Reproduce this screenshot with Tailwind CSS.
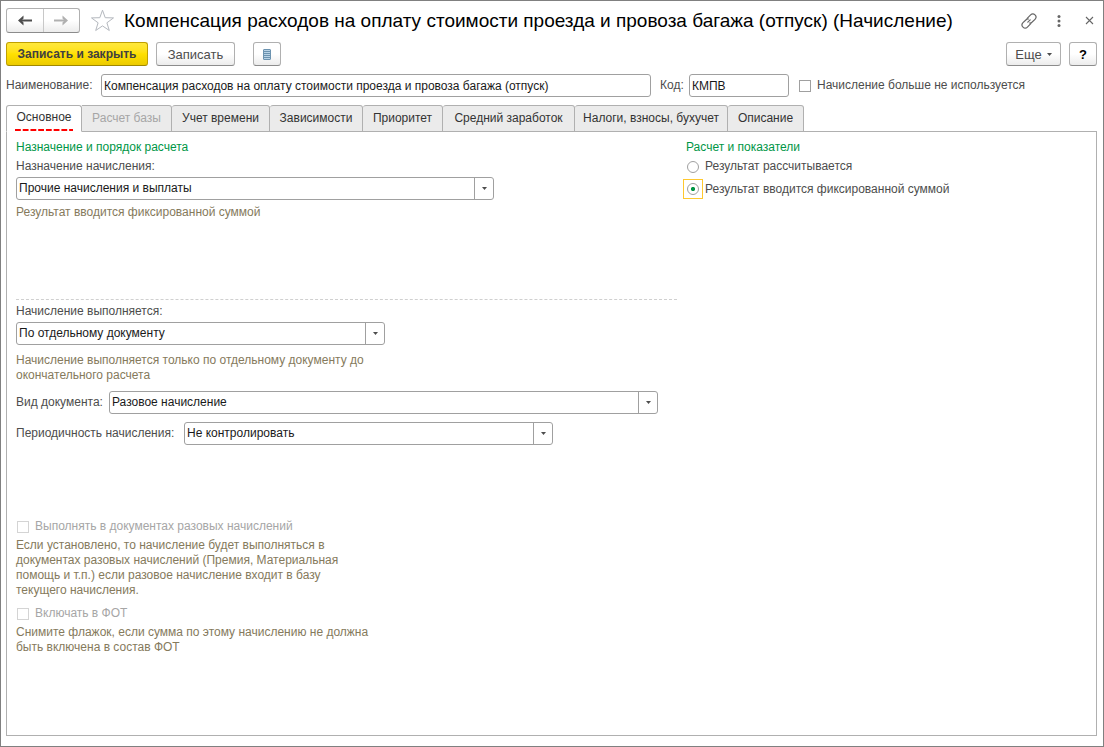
<!DOCTYPE html>
<html lang="ru">
<head>
<meta charset="utf-8">
<meta name="viewport" content="width=device-width, initial-scale=1">
<title>Компенсация расходов (Начисление)</title>
<script src="https://cdn.jsdelivr.net/npm/@tailwindcss/browser@4"></script>
</head>
<body class="flex min-h-screen flex-col border border-[#808080] bg-white pt-[7px] pr-[6px] pb-[10px] pl-[5px] font-['Liberation_Sans',Arial,sans-serif] text-[12px] leading-[15px] text-[#4d4d4d]">

<header class="flex h-[25px] items-center">
  <div class="flex h-[25px] w-[74px] shrink-0 rounded-[3px] border border-[#b0b0b0] border-b-[#8c8c8c] bg-linear-to-b from-white from-50% to-[#ececec]">
    <button type="button" aria-label="Назад" class="flex flex-1 items-center justify-center border-r border-[#c8c8c8]">
      <svg width="14" height="11" viewBox="0 0 14 11" fill="none" stroke="#4d4d4d" stroke-width="2"><path d="M14 5.500H3"/><path d="M5.500 0.500L0 5.500L5.500 10.500V7.500L3.500 5.500L5.500 3.500Z" fill="#4d4d4d" stroke="none"/></svg>
    </button>
    <button type="button" aria-label="Вперед" class="flex flex-1 items-center justify-center">
      <svg width="14" height="11" viewBox="0 0 14 11" fill="none" stroke="#b0b0b0" stroke-width="2"><path d="M0 5.500H11"/><path d="M8.500 0.500L14 5.500L8.500 10.500V7.500L10.500 5.500L8.500 3.500Z" fill="#b0b0b0" stroke="none"/></svg>
    </button>
  </div>
  <button type="button" aria-label="В избранное" class="ml-[10px] shrink-0">
    <svg width="25" height="23" viewBox="0 0 25 23" fill="#fff" stroke="#b4b8be" stroke-width="1"><path d="M12.500 1.200L15.200 8.700L23.500 8.900L16.900 13.800L19.300 21.500L12.500 16.900L5.700 21.500L8.100 13.800L1.500 8.900L9.800 8.700Z"/></svg>
  </button>
  <h1 class="ml-[9px] flex-1 text-[19px] leading-6 text-black">Компенсация расходов на оплату стоимости проезда и провоза багажа (отпуск) (Начисление)</h1>
  <div class="flex shrink-0 items-center pr-[3px]">
    <button type="button" aria-label="Получить ссылку">
      <svg width="16" height="16" viewBox="0 0 16 16" fill="none" stroke="#666" stroke-width="1.200" stroke-linecap="round"><path d="M6.200 5.300L9.600 1.900A2.900 2.900 0 0 1 14 6.300L10.900 9.300A2.900 2.900 0 0 1 8.600 10"/><path d="M9.800 10.700L6.400 14.100A2.900 2.900 0 0 1 2 9.700L5.100 6.700A2.900 2.900 0 0 1 7.400 6"/><path d="M6.800 9.200L9.200 6.800"/></svg>
    </button>
    <button type="button" aria-label="Дополнительно" class="ml-[20px]">
      <svg width="4" height="12" viewBox="0 0 4 12" fill="#666"><circle cx="2" cy="1.500" r="1.500"/><circle cx="2" cy="6" r="1.500"/><circle cx="2" cy="10.500" r="1.500"/></svg>
    </button>
    <button type="button" aria-label="Закрыть" class="ml-[24px]">
      <svg width="9" height="9" viewBox="0 0 9 9" fill="none" stroke="#666" stroke-width="1.100"><path d="M1 1L8 8M8 1L1 8"/></svg>
    </button>
  </div>
</header>

<div class="mt-[9px] flex items-center">
  <button type="button" class="h-6 w-[142px] rounded-[3px] border border-[#c0a000] border-b-[#a08800] bg-linear-to-b from-[#ffe83b] via-[#ffe000] to-[#eccb00] font-bold text-[#404040]">Записать и закрыть</button>
  <button type="button" class="ml-2 h-6 w-[79px] rounded-[3px] border border-[#b0b0b0] border-b-[#8c8c8c] bg-linear-to-b from-white from-50% to-[#ececec] text-[13px]">Записать</button>
  <button type="button" aria-label="Реестр" class="ml-[18px] flex h-6 w-7 items-center justify-center rounded-[3px] border border-[#b0b0b0] border-b-[#8c8c8c] bg-linear-to-b from-white from-50% to-[#ececec]">
    <svg width="8" height="11" viewBox="0 0 8 11"><rect x="0.500" y="0.500" width="7" height="10" rx="0.500" fill="#b9d3e6" stroke="#6c93b0"/><path d="M1 2.500H7M1 4.500H7M1 6.500H7M1 8.500H7" stroke="#6c93b0"/></svg>
  </button>
  <button type="button" class="ml-auto flex h-6 w-[55px] items-center justify-center gap-[5px] rounded-[3px] border border-[#b0b0b0] border-b-[#8c8c8c] bg-linear-to-b from-white from-50% to-[#ececec] text-[13px]">Еще
    <svg width="5" height="3" viewBox="0 0 5 3" fill="#4d4d4d"><path d="M0 0H5L2.500 3Z"/></svg>
  </button>
  <button type="button" aria-label="Справка" class="ml-2 h-6 w-7 rounded-[3px] border border-[#b0b0b0] border-b-[#8c8c8c] bg-linear-to-b from-white from-50% to-[#ececec] text-[13px] font-bold text-black">?</button>
</div>

<div class="mt-2 flex items-center">
  <label for="name" class="w-[95px] shrink-0 whitespace-nowrap">Наименование:</label>
  <input id="name" type="text" value="Компенсация расходов на оплату стоимости проезда и провоза багажа (отпуск)" class="h-[23px] w-[550px] min-w-0 rounded-[3px] border border-[#a0a0a0] px-[2px] text-[#1a1a1a]">
  <label for="code" class="ml-[9px] w-[29px] shrink-0 whitespace-nowrap">Код:</label>
  <input id="code" type="text" value="КМПВ" class="h-[23px] w-[100px] rounded-[3px] border border-[#a0a0a0] px-[2px] text-[#1a1a1a]">
  <label class="ml-[10px] flex items-center gap-[6px] whitespace-nowrap"><input type="checkbox" class="size-3 appearance-none border border-[#a0a0a0] bg-white checked:bg-[#009646]">Начисление больше не используется</label>
</div>

<nav role="tablist" class="relative z-10 mt-2 -mb-px flex h-[27px] text-[#333]">
  <button type="button" role="tab" aria-selected="true" class="w-[76px] rounded-t-[3px] border border-[#b0b0b0] border-b-white bg-white px-[8px] whitespace-nowrap"><span class="flex h-full flex-col justify-end gap-1">Основное<svg class="h-[2px] w-full" viewBox="0 0 60 2" preserveAspectRatio="none"><path d="M0 1H60" stroke="#f00" stroke-width="2" stroke-dasharray="6 2"/></svg></span></button>
  <button type="button" role="tab" disabled class="w-[90px] rounded-tr-[3px] border border-l-0 border-[#b0b0b0] bg-[#ebebeb] whitespace-nowrap text-[#a6a6a6]">Расчет базы</button>
  <button type="button" role="tab" class="w-[98px] rounded-t-[3px] border border-l-0 border-[#b0b0b0] bg-[#ebebeb] whitespace-nowrap">Учет времени</button>
  <button type="button" role="tab" class="w-[93px] rounded-t-[3px] border border-l-0 border-[#b0b0b0] bg-[#ebebeb] whitespace-nowrap">Зависимости</button>
  <button type="button" role="tab" class="w-20 rounded-t-[3px] border border-l-0 border-[#b0b0b0] bg-[#ebebeb] whitespace-nowrap">Приоритет</button>
  <button type="button" role="tab" class="w-[132px] rounded-t-[3px] border border-l-0 border-[#b0b0b0] bg-[#ebebeb] whitespace-nowrap">Средний заработок</button>
  <button type="button" role="tab" class="w-[153px] rounded-t-[3px] border border-l-0 border-[#b0b0b0] bg-[#ebebeb] whitespace-nowrap">Налоги, взносы, бухучет</button>
  <button type="button" role="tab" class="w-[76px] rounded-t-[3px] border border-l-0 border-[#b0b0b0] bg-[#ebebeb] whitespace-nowrap">Описание</button>
</nav>

<main class="grid flex-1 grid-cols-[minmax(0,661px)_1fr] gap-x-[9px] border border-[#b0b0b0] px-[9px] pt-2">
  <section>
    <h2 class="text-[#009646]">Назначение и порядок расчета</h2>
    <label for="purpose" class="mt-1 block">Назначение начисления:</label>
    <div class="relative mt-[3px] h-[23px] max-w-[478px]">
      <select id="purpose" class="block size-full appearance-none rounded-[3px] border border-[#a0a0a0] bg-white pr-5 pl-[2px] text-[#1a1a1a]"><option>Прочие начисления и выплаты</option></select>
      <span class="pointer-events-none absolute inset-y-0 right-0 flex w-5 items-center justify-center border-l border-[#a0a0a0]"><svg width="5" height="3" viewBox="0 0 5 3" fill="#4d4d4d"><path d="M0 0H5L2.500 3Z"/></svg></span>
    </div>
    <p class="mt-[5px] h-[95px] border-b border-dashed border-[#d0d0d0] text-[#857a5c]">Результат вводится фиксированной суммой</p>

    <label for="mode" class="mt-1 block">Начисление выполняется:</label>
    <div class="relative mt-[3px] h-[23px] max-w-[369px]">
      <select id="mode" class="block size-full appearance-none rounded-[3px] border border-[#a0a0a0] bg-white pr-5 pl-[2px] text-[#1a1a1a]"><option>По отдельному документу</option></select>
      <span class="pointer-events-none absolute inset-y-0 right-0 flex w-5 items-center justify-center border-l border-[#a0a0a0]"><svg width="5" height="3" viewBox="0 0 5 3" fill="#4d4d4d"><path d="M0 0H5L2.500 3Z"/></svg></span>
    </div>
    <p class="mt-2 max-w-[369px] text-[#857a5c]">Начисление выполняется только по отдельному документу до окончательного расчета</p>

    <div class="mt-2 flex items-center">
      <label for="doc" class="w-[93px] shrink-0 whitespace-nowrap">Вид документа:</label>
      <div class="relative h-[23px] w-[549px] min-w-0">
        <select id="doc" class="block size-full appearance-none rounded-[3px] border border-[#a0a0a0] bg-white pr-5 pl-[2px] text-[#1a1a1a]"><option>Разовое начисление</option></select>
        <span class="pointer-events-none absolute inset-y-0 right-0 flex w-5 items-center justify-center border-l border-[#a0a0a0]"><svg width="5" height="3" viewBox="0 0 5 3" fill="#4d4d4d"><path d="M0 0H5L2.500 3Z"/></svg></span>
      </div>
    </div>
    <div class="mt-2 flex items-center">
      <label for="period" class="w-[168px] shrink-0 whitespace-nowrap">Периодичность начисления:</label>
      <div class="relative h-[23px] w-[369px] min-w-0">
        <select id="period" class="block size-full appearance-none rounded-[3px] border border-[#a0a0a0] bg-white pr-5 pl-[2px] text-[#1a1a1a]"><option>Не контролировать</option></select>
        <span class="pointer-events-none absolute inset-y-0 right-0 flex w-5 items-center justify-center border-l border-[#a0a0a0]"><svg width="5" height="3" viewBox="0 0 5 3" fill="#4d4d4d"><path d="M0 0H5L2.500 3Z"/></svg></span>
      </div>
    </div>

    <label class="mt-[74px] flex items-center gap-[6px] pl-px text-[#a6a6a6]"><input type="checkbox" disabled class="size-3 appearance-none border border-[#d4d4d4] bg-white">Выполнять в документах разовых начислений</label>
    <p class="mt-1 max-w-[340px] text-[#857a5c]">Если установлено, то начисление будет выполняться в документах разовых начислений (Премия, Материальная помощь и т.п.) если разовое начисление входит в базу текущего начисления.</p>
    <label class="mt-2 flex items-center gap-[6px] pl-px text-[#a6a6a6]"><input type="checkbox" disabled class="size-3 appearance-none border border-[#d4d4d4] bg-white">Включать в ФОТ</label>
    <p class="mt-1 max-w-[369px] text-[#857a5c]">Снимите флажок, если сумма по этому начислению не должна быть включена в состав ФОТ</p>
  </section>

  <fieldset class="min-w-0">
    <legend class="text-[#009646]">Расчет и показатели</legend>
    <label class="mt-1 flex items-center gap-[6px]"><input type="radio" name="result" class="ml-px size-3 appearance-none rounded-full border border-[#a0a0a0] bg-white checked:bg-radial checked:from-[#009646] checked:from-25% checked:to-white checked:to-35%">Результат рассчитывается</label>
    <label class="mt-[5px] -ml-[3px] flex items-center gap-[2px]"><span class="flex size-5 items-center justify-center border border-[#ffc82e]"><input type="radio" name="result" checked class="size-3 appearance-none rounded-full border border-[#a0a0a0] bg-white checked:bg-radial checked:from-[#009646] checked:from-25% checked:to-white checked:to-35%"></span>Результат вводится фиксированной суммой</label>
  </fieldset>
</main>
</body>
</html>
